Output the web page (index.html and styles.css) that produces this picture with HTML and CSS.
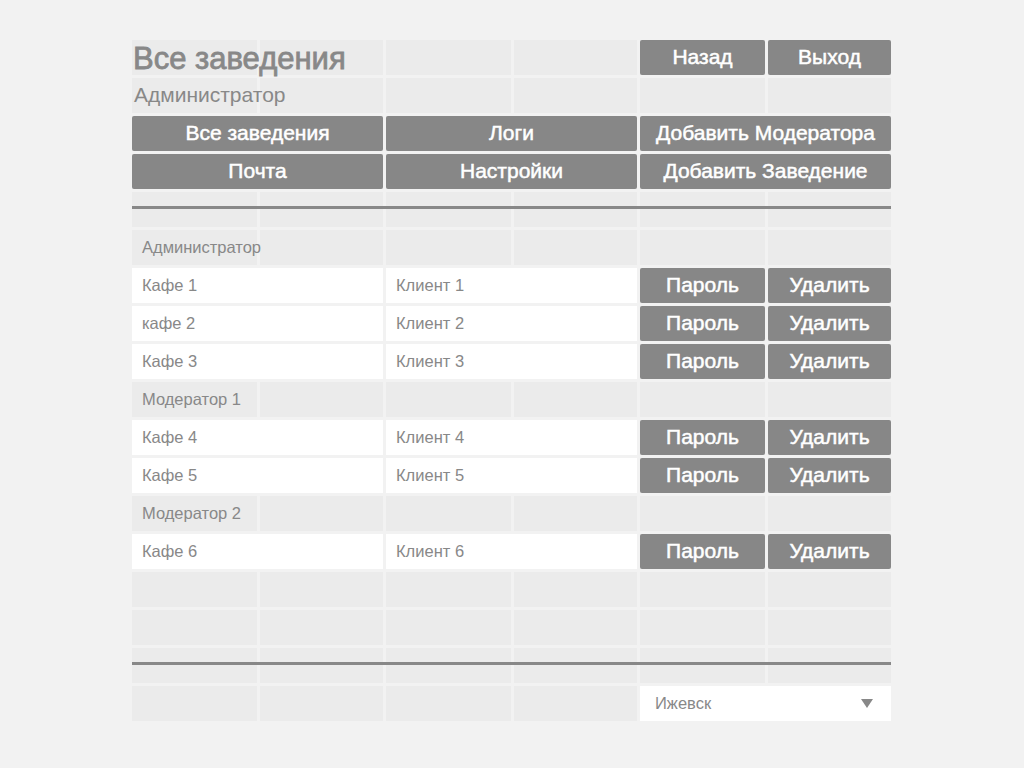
FILE: index.html
```html
<!DOCTYPE html>
<html lang="ru">
<head>
    <meta charset="UTF-8">
    <meta name="viewport" content="width=device-width, initial-scale=1.0">
    <title>Все заведения</title>
    <link rel="stylesheet" href="styles.css">
</head>
<body>
    <div class="board">
        <!-- Шапка -->
        <h1 class="title">Все заведения</h1>
        <button class="btn btn-back">Назад</button>
        <button class="btn">Выход</button>
        <div class="role">Администратор</div>

        <!-- Меню -->
        <button class="btn nav nav-first">Все заведения</button>
        <button class="btn nav">Логи</button>
        <button class="btn nav">Добавить Модератора</button>
        <button class="btn nav">Почта</button>
        <button class="btn nav">Настройки</button>
        <button class="btn nav">Добавить Заведение</button>

        <div class="divider"></div>

        <!-- Список заведений -->
        <div class="group">Администратор</div>
        <div class="field field-first">Кафе 1</div>
        <div class="field">Клиент 1</div>
        <button class="btn">Пароль</button>
        <button class="btn">Удалить</button>

        <div class="field field-first">кафе 2</div>
        <div class="field">Клиент 2</div>
        <button class="btn">Пароль</button>
        <button class="btn">Удалить</button>

        <div class="field field-first">Кафе 3</div>
        <div class="field">Клиент 3</div>
        <button class="btn">Пароль</button>
        <button class="btn">Удалить</button>

        <div class="group">Модератор 1</div>
        <div class="field field-first">Кафе 4</div>
        <div class="field">Клиент 4</div>
        <button class="btn">Пароль</button>
        <button class="btn">Удалить</button>

        <div class="field field-first">Кафе 5</div>
        <div class="field">Клиент 5</div>
        <button class="btn">Пароль</button>
        <button class="btn">Удалить</button>

        <div class="group">Модератор 2</div>
        <div class="field field-first">Кафе 6</div>
        <div class="field">Клиент 6</div>
        <button class="btn">Пароль</button>
        <button class="btn">Удалить</button>

        <div class="divider divider-bottom"></div>

        <!-- Город -->
        <div class="city">
            <span>Ижевск</span>
            <span class="arrow"></span>
        </div>
    </div>
</body>
</html>
```

FILE: styles.css
```css
body {
    font-family: "Liberation Sans", Arial, sans-serif;
    margin: 0;
    padding: 40px 0 0 132px;
    background-color: #f2f2f2;
}
.board {
    display: grid;
    grid-template-columns: 125px 123px 125px 123px 125px 123px;
    grid-template-rows: repeat(18, 35px);
    gap: 3px;
    width: 759px;
    background:
        repeating-linear-gradient(to right, transparent 0 125px, #f2f2f2 125px 128px, transparent 128px 251px, #f2f2f2 251px 254px),
        repeating-linear-gradient(to bottom, transparent 0 35px, #f2f2f2 35px 38px),
        #ebebeb;
}
.title {
    margin: 0;
    padding-left: 1px;
    font-size: 31px;
    font-weight: normal;
    line-height: 37px;
    color: #888;
    white-space: nowrap;
    -webkit-text-stroke: 0.8px #888;
}
.btn {
    font-family: inherit;
    font-size: 21px;
    color: #fff;
    background-color: #878787;
    border: none;
    border-radius: 2px;
    padding: 0 0 2px;
    cursor: pointer;
    white-space: nowrap;
    -webkit-text-stroke: 0.5px #fff;
}
.btn-back {
    grid-column: 5;
}
.nav {
    grid-column: span 2;
}
.nav-first {
    grid-column: 1 / span 2;
}
.role {
    grid-column: 1;
    padding-left: 2px;
    font-size: 21px;
    line-height: 34px;
    color: #888;
    white-space: nowrap;
}
.divider {
    grid-column: 1 / -1;
    align-self: start;
    margin-top: 14px;
    height: 3px;
    background-color: #888;
}
.divider-bottom {
    grid-row: 17;
}
.group {
    grid-column: 1;
    padding-left: 10px;
    font-size: 16.5px;
    line-height: 35px;
    color: #888;
    white-space: nowrap;
}
.field {
    grid-column: span 2;
    padding-left: 10px;
    font-size: 16.5px;
    line-height: 35px;
    color: #888;
    background-color: #fff;
}
.field-first {
    grid-column: 1 / span 2;
}
.city {
    grid-row: 18;
    grid-column: 5 / span 2;
    display: flex;
    align-items: center;
    justify-content: space-between;
    padding: 0 18px 0 15px;
    font-size: 16.5px;
    color: #888;
    background-color: #fff;
}
.arrow {
    width: 0;
    height: 0;
    border-left: 6px solid transparent;
    border-right: 6px solid transparent;
    border-top: 9px solid #888;
}
```
